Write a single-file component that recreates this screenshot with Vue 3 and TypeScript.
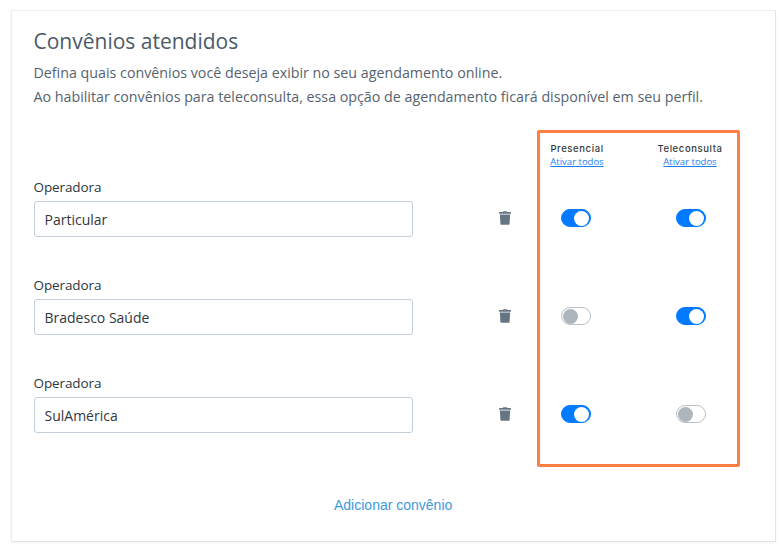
<template>
  <div class="page">
    <section class="card">
      <h2 class="title">Convênios atendidos</h2>
      <p class="desc">Defina quais convênios você deseja exibir no seu agendamento online.</p>
      <p class="desc">Ao habilitar convênios para teleconsulta, essa opção de agendamento ficará disponível em seu perfil.</p>

      <div class="content">
        <div class="fields">
          <div v-for="row in rows" :key="row.name" class="field-row">
            <div class="field">
              <label class="label">Operadora</label>
              <input class="input" type="text" :value="row.name" />
            </div>
            <svg class="trash" viewBox="0 0 448 512" width="12" height="14">
              <path fill="#667583" d="M432 32H312l-9.400-18.700A24 24 0 0 0 281.100 0H166.800a23.700 23.700 0 0 0-21.400 13.300L136 32H16A16 16 0 0 0 0 48v32a16 16 0 0 0 16 16h416a16 16 0 0 0 16-16V48a16 16 0 0 0-16-16zM53.200 467a48 48 0 0 0 47.900 45h245.800a48 48 0 0 0 47.900-45L416 128H32z" />
            </svg>
          </div>
        </div>

        <div class="highlight">
          <div class="heads">
            <div v-for="col in columns" :key="col" class="head">
              <span class="head-name">{{ col }}</span>
              <a class="head-link">Ativar todos</a>
            </div>
          </div>
          <div v-for="row in rows" :key="row.name" class="toggle-row">
            <span class="switch" :class="{ on: row.presencial }"><i class="knob"></i></span>
            <span class="switch" :class="{ on: row.teleconsulta }"><i class="knob"></i></span>
          </div>
        </div>
      </div>

      <div class="add"><a class="add-link">Adicionar convênio</a></div>
    </section>
  </div>
</template>

<script setup lang="ts">
interface Row {
  name: string;
  presencial: boolean;
  teleconsulta: boolean;
}

const columns = ['Presencial', 'Teleconsulta'];

const rows: Row[] = [
  { name: 'Particular', presencial: true, teleconsulta: true },
  { name: 'Bradesco Saúde', presencial: false, teleconsulta: true },
  { name: 'SulAmérica', presencial: true, teleconsulta: false }
];
</script>

<style scoped>
.page {
  width: 784px;
  height: 553px;
  padding: 10px 8px 11px 11px;
  box-sizing: border-box;
  background: #fff;
  font-family: "Open Sans", "Liberation Sans", sans-serif;
}

.card {
  height: 532px;
  box-sizing: border-box;
  padding: 15px 22px 0 21.500px;
  border: 1px solid #eceeef;
  border-bottom-color: #e2e4e6;
  border-right-color: #e2e4e6;
  box-shadow: 0 1px 2px rgba(0, 0, 0, 0.05);
}

.title {
  margin: 0 0 5px;
  font-size: 21px;
  font-weight: 400;
  line-height: 30px;
  color: #4a5a69;
}

.desc {
  margin: 0;
  font-size: 14.250px;
  line-height: 24px;
  color: #56636f;
}

.content {
  display: flex;
  margin-top: 21px;
}

.fields {
  width: 503.500px;
  padding-top: 45px;
}

.field-row {
  display: flex;
  align-items: flex-end;
  height: 62px;
  margin-bottom: 36px;
}

.field {
  width: 379.500px;
}

.label {
  display: block;
  margin-bottom: 3px;
  font-size: 13.500px;
  line-height: 22px;
  letter-spacing: -0.1px;
  color: #2e3840;
}

.input {
  display: block;
  width: 100%;
  height: 36px;
  box-sizing: border-box;
  padding: 0 10px;
  border: 1px solid #c3ced8;
  border-radius: 3px;
  background: #fff;
  font-family: inherit;
  font-size: 14px;
  color: #33383d;
}

.trash {
  margin: 0 0 12px 86px;
}

.highlight {
  width: 203px;
  height: 337px;
  box-sizing: border-box;
  border: 3px solid #ff7f41;
  border-radius: 2px;
}

.heads {
  display: flex;
  gap: 39px;
  height: 76px;
  padding-top: 9px;
  box-sizing: border-box;
}

.head {
  display: flex;
  flex: none;
  flex-direction: column;
  align-items: center;
  width: 74px;
}

.head-name {
  font-family: Inter, "Liberation Sans", sans-serif;
  font-size: 9.500px;
  font-weight: 500;
  line-height: 13px;
  letter-spacing: 0.6px;
  color: #343a40;
  white-space: nowrap;
}

.head-link {
  font-size: 9.500px;
  line-height: 13px;
  color: #1a80f0;
  text-decoration: underline;
  white-space: nowrap;
}

.toggle-row {
  display: flex;
  gap: 85px;
  height: 18px;
  margin-bottom: 80px;
  padding-left: 21px;
}

.switch {
  position: relative;
  width: 30px;
  height: 18px;
  box-sizing: border-box;
  border: 1px solid #b9c0c7;
  border-radius: 9px;
  background: #fff;
}

.knob {
  position: absolute;
  top: 0.500px;
  left: 1px;
  width: 15px;
  height: 15px;
  border-radius: 50%;
  background: #adb5bd;
}

.switch.on {
  border-color: #007bff;
  background: #007bff;
}

.switch.on .knob {
  left: 12px;
  background: #fff;
}

.add {
  margin-top: 24px;
  padding-left: 300.500px;
}

.add-link {
  font-family: "Liberation Sans", Arial, sans-serif;
  font-size: 14px;
  line-height: 20px;
  color: #3d9ad9;
}
</style>
